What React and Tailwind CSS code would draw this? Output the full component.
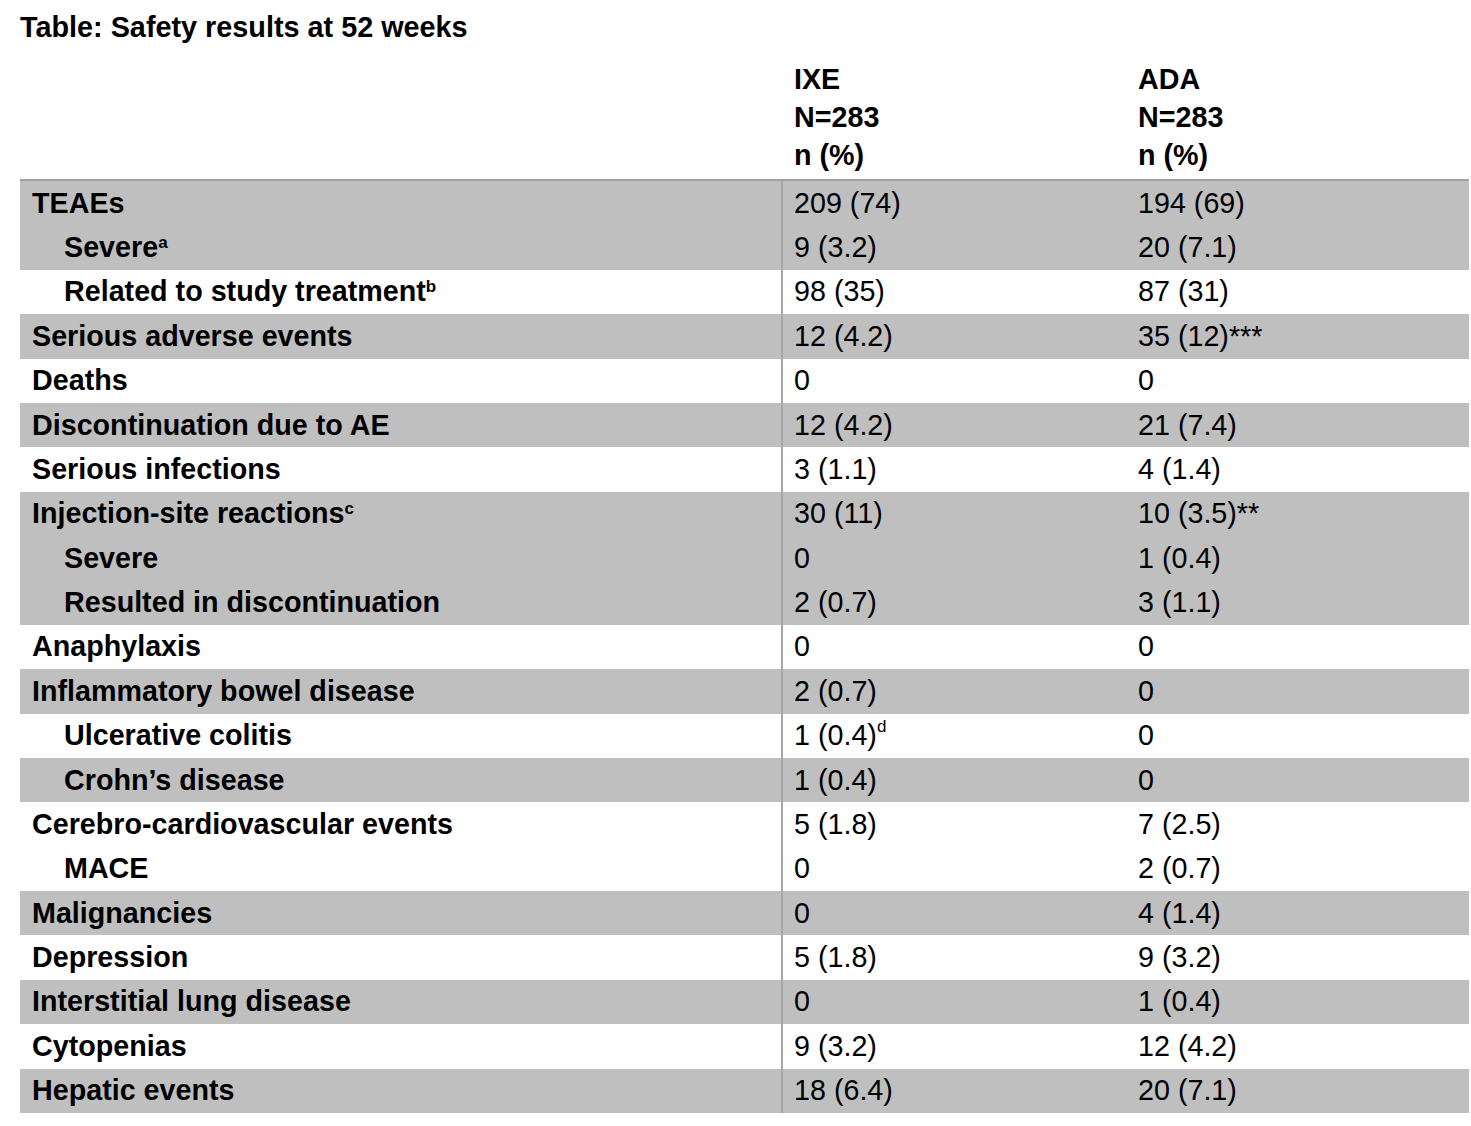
const rows = [
  { shade: true, items: [
    { label: 'TEAEs', ixe: '209 (74)', ada: '194 (69)' },
    { label: 'Severe', sup: 'a', sub: true, ixe: '9 (3.2)', ada: '20 (7.1)' },
  ] },
  { shade: false, items: [
    { label: 'Related to study treatment', sup: 'b', sub: true, ixe: '98 (35)', ada: '87 (31)' },
  ] },
  { shade: true, items: [{ label: 'Serious adverse events', ixe: '12 (4.2)', ada: '35 (12)***' }] },
  { shade: false, items: [{ label: 'Deaths', ixe: '0', ada: '0' }] },
  { shade: true, items: [{ label: 'Discontinuation due to AE', ixe: '12 (4.2)', ada: '21 (7.4)' }] },
  { shade: false, items: [{ label: 'Serious infections', ixe: '3 (1.1)', ada: '4 (1.4)' }] },
  { shade: true, items: [
    { label: 'Injection-site reactions', sup: 'c', ixe: '30 (11)', ada: '10 (3.5)**' },
    { label: 'Severe', sub: true, ixe: '0', ada: '1 (0.4)' },
    { label: 'Resulted in discontinuation', sub: true, ixe: '2 (0.7)', ada: '3 (1.1)' },
  ] },
  { shade: false, items: [{ label: 'Anaphylaxis', ixe: '0', ada: '0' }] },
  { shade: true, items: [{ label: 'Inflammatory bowel disease', ixe: '2 (0.7)', ada: '0' }] },
  { shade: false, items: [{ label: 'Ulcerative colitis', sub: true, ixe: '1 (0.4)', ixeSup: 'd', ada: '0' }] },
  { shade: true, items: [{ label: 'Crohn’s disease', sub: true, ixe: '1 (0.4)', ada: '0' }] },
  { shade: false, items: [
    { label: 'Cerebro-cardiovascular events', ixe: '5 (1.8)', ada: '7 (2.5)' },
    { label: 'MACE', sub: true, ixe: '0', ada: '2 (0.7)' },
  ] },
  { shade: true, items: [{ label: 'Malignancies', ixe: '0', ada: '4 (1.4)' }] },
  { shade: false, items: [{ label: 'Depression', ixe: '5 (1.8)', ada: '9 (3.2)' }] },
  { shade: true, items: [{ label: 'Interstitial lung disease', ixe: '0', ada: '1 (0.4)' }] },
  { shade: false, items: [{ label: 'Cytopenias', ixe: '9 (3.2)', ada: '12 (4.2)' }] },
  { shade: true, items: [{ label: 'Hepatic events', ixe: '18 (6.4)', ada: '20 (7.1)' }] },
];

const Sup = ({ children, bold }) => (
  <sup className={`text-[17px] ${bold ? 'font-bold' : 'font-normal'} relative -top-[9px] align-baseline leading-none`}>
    {children}
  </sup>
);

export default function App() {
  return (
    <div className="bg-white min-h-screen pl-5 text-black" style={{ fontFamily: '"Liberation Sans", Arial, sans-serif' }}>
      <h1 className="text-[28.8px] font-bold leading-[38px] pt-[8px]">Table: Safety results at 52 weeks</h1>

      <div className="flex mt-[14px] pb-[5px] text-[28.7px] font-bold leading-[38px]">
        <div className="w-[763px]" />
        <div className="w-[344px] pl-[11px]">
          <div>IXE</div>
          <div>N=283</div>
          <div>n (%)</div>
        </div>
        <div className="pl-[11px]">
          <div>ADA</div>
          <div>N=283</div>
          <div>n (%)</div>
        </div>
      </div>

      <div className="w-[1449px] border-t-2 border-[#a0a0a0] text-[28.7px]">
        {rows.map((group, gi) => (
          <div key={gi} className={group.shade ? 'bg-[#bfbfbf]' : 'bg-white'}>
            {group.items.map((r, ri) => (
              <div key={ri} className="flex h-[44.38px] items-center">
                <div className={`w-[761px] font-bold ${r.sub ? 'pl-[44px]' : 'pl-3'}`}>
                  {r.label}
                  {r.sup && <Sup bold>{r.sup}</Sup>}
                </div>
                <div className="w-[346px] h-full flex items-center border-l-2 border-[#a6a6a6] pl-[11px]">
                  {r.ixe}
                  {r.ixeSup && <Sup>{r.ixeSup}</Sup>}
                </div>
                <div className="pl-[11px]">{r.ada}</div>
              </div>
            ))}
          </div>
        ))}
      </div>
    </div>
  );
}
